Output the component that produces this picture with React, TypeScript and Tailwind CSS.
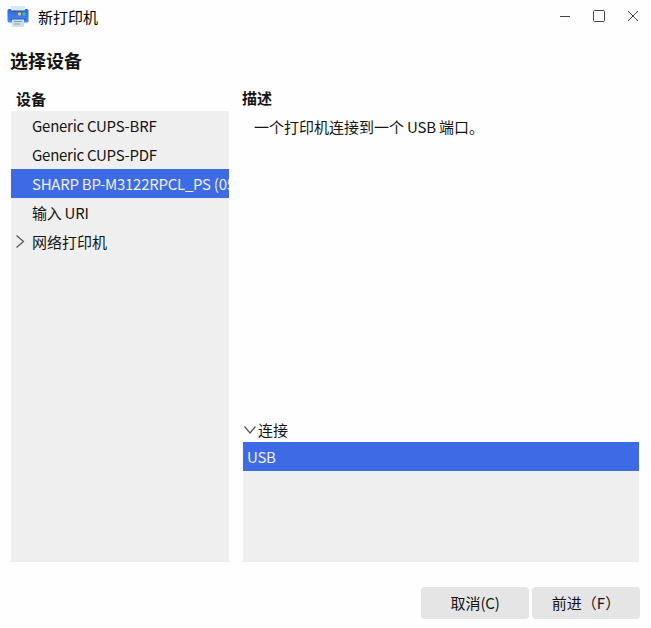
import type { ReactNode } from 'react';

function PrinterIcon() {
  return (
    <svg width="22" height="22" viewBox="0 0 22 22">
      <defs>
        <linearGradient id="body" x1="0" y1="0" x2="0" y2="1">
          <stop offset="0" stopColor="#2f66d8" />
          <stop offset="1" stopColor="#4a8bf8" />
        </linearGradient>
      </defs>
      <rect x="0.5" y="3" width="21" height="13.5" rx="1.5" fill="url(#body)" />
      <rect x="4" y="0" width="14" height="5" rx="0.5" fill="#d3eaf2" />
      <rect x="4" y="4.500" width="14" height="1" fill="#2450a8" />
      <rect x="11" y="6.500" width="3" height="3" rx="1" fill="#fbc53d" />
      <rect x="15.500" y="6.500" width="3" height="3" rx="1" fill="#1fd0a5" />
      <rect x="3.500" y="12.600" width="15" height="1.200" fill="#2450a8" />
      <path d="M5 13.500h12v6a1.500 1.500 0 0 1-1.500 1.500h-9A1.500 1.500 0 0 1 5 19.500z" fill="#c9e1e9" />
      <path d="M7 15.500h8M7 18h6" stroke="#8d9ba6" strokeWidth="1.200" />
    </svg>
  );
}

function Row({ children, selected = false, expandable = false }: { children: ReactNode; selected?: boolean; expandable?: boolean }) {
  return (
    <div className={`flex h-[29px] items-center overflow-hidden whitespace-nowrap ${selected ? 'bg-[#3d6be5] text-[#f0f0f0]' : ''}`}>
      <span className="flex w-[21px] shrink-0 pl-[5px]">
        {expandable && (
          <svg width="9" height="13" viewBox="0 0 9 13" fill="none" stroke="#555" strokeWidth="1.2">
            <path d="M0.500 0.500 7.500 6.500 0.500 12.500" />
          </svg>
        )}
      </span>
      <span className="pt-px">{children}</span>
    </div>
  );
}

export default function App() {
  return (
    <div className="flex h-[628px] w-[651px] flex-col bg-[#fefefe] font-['Noto_Sans_CJK_SC',sans-serif] text-[15px] leading-[22px] text-[#141414]">
      <header className="flex h-[34px] shrink-0 items-center pl-[7px]">
        <PrinterIcon />
        <span className="ml-[9px] text-black">新打印机</span>
        <div className="mr-3 ml-auto flex items-center gap-[22px] pb-[2px] text-[#444]">
          <svg width="12" height="12" viewBox="0 0 12 12" stroke="currentColor">
            <path d="M1 6.500h10" />
          </svg>
          <svg width="12" height="12" viewBox="0 0 12 12" fill="none" stroke="currentColor">
            <rect x="0.500" y="0.500" width="11" height="11" rx="1.200" />
          </svg>
          <svg width="12" height="12" viewBox="0 0 12 12" stroke="currentColor">
            <path d="M1 1l10 10M11 1 1 11" />
          </svg>
        </div>
      </header>

      <h1 className="h-[53px] shrink-0 pt-[13px] pl-[10px] text-[18px] leading-[26px] font-bold">选择设备</h1>

      <main className="flex h-[475px] shrink-0 gap-[14px] pr-3 pl-[11px]">
        <section className="flex w-[218px] shrink-0 flex-col">
          <h2 className="h-[24px] pt-px pl-[5px] font-bold">设备</h2>
          <div className="flex-1 bg-[#efefef] tracking-[-0.26px]">
            <Row>Generic CUPS-BRF</Row>
            <Row>Generic CUPS-PDF</Row>
            <Row selected>SHARP BP-M3122RPCL_PS (05)</Row>
            <Row>输入 URI</Row>
            <Row expandable>
              <span className="tracking-normal">网络打印机</span>
            </Row>
          </div>
        </section>
        <section className="flex flex-1 flex-col">
          <h2 className="-ml-px h-[29px] font-bold">描述</h2>
          <p className="flex-1 pl-[11px]">
            一个打印机连接到一个<span className="tracking-[-0.26px]"> USB </span>端口。
          </p>
          <div className="flex h-[24px] items-center gap-[2px] pl-px">
            <svg width="12" height="8" viewBox="0 0 12 8" fill="none" stroke="#555" strokeWidth="1.2">
              <path d="M0.500 0.500 6 7 11.500 0.500" />
            </svg>
            <span>连接</span>
          </div>
          <div className="h-[120px] bg-[#efefef]">
            <div className="flex h-[29px] items-center bg-[#3d6be5] pt-px pl-1 tracking-[-0.26px] text-[#f0f0f0]">USB</div>
          </div>
        </section>
      </main>

      <footer className="flex justify-end gap-[3px] pt-[25px] pr-[11px]">
        <button className="h-8 w-[108px] rounded-[4px] bg-[#e5e5e5]">
          取消<span className="tracking-[-0.26px]">(C)</span>
        </button>
        <button className="h-8 w-[108px] rounded-[4px] bg-[#e5e5e5]">前进（F）</button>
      </footer>
    </div>
  );
}
